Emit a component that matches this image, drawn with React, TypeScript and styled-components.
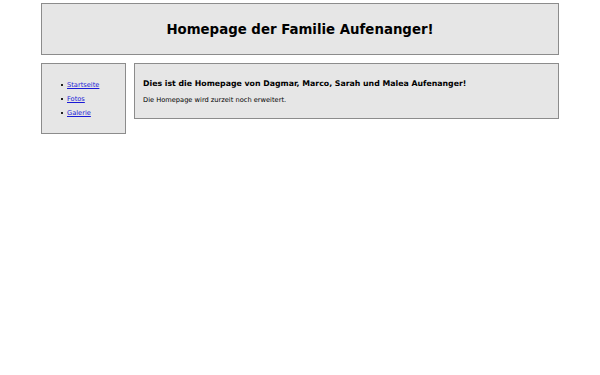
import React from "react"
import styled, { createGlobalStyle } from "styled-components"

const GlobalStyle = createGlobalStyle`
  body {
    margin: 0;
    background: #fff;
    font-family: "DejaVu Sans", Verdana, sans-serif;
    color: #000;
  }
`

const Page = styled.div`
  width: 518px;
  margin: 3px auto 0;
  display: flex;
  flex-direction: column;
  gap: 8px;
`

const Box = styled.div`
  background: #e6e6e6;
  border: 1px solid #8c8c8c;
  box-sizing: border-box;
`

const Header = styled(Box)`
  height: 52px;
  display: flex;
  align-items: center;
  justify-content: center;
`

const Title = styled.h1`
  margin: 0;
  font-size: 13.33px;
  font-weight: bold;
`

const Body = styled.div`
  display: grid;
  grid-template-columns: 85px 1fr;
  gap: 8px;
  align-items: start;
`

const Nav = styled(Box)`
  height: 71px;
  padding-top: 14px;
`

const NavList = styled.ul`
  margin: 0;
  padding-left: 19px;
  font-size: 6.67px;
  line-height: 14px;
  list-style: none;
`

const NavItem = styled.li`
  display: flex;
  align-items: center;
  gap: 4px;

  &::before {
    content: "";
    width: 2px;
    height: 2px;
    background: #222;
  }
`

const NavLink = styled.a`
  color: #1a1ad6;
  text-decoration: underline;
`

const Main = styled(Box)`
  height: 56px;
  padding: 15px 8px 0;
`

const Heading = styled.h2`
  margin: 0 0 8px;
  font-size: 7.8px;
  font-weight: bold;
`

const Text = styled.p`
  margin: 0;
  font-size: 6.67px;
`

export default function App(): JSX.Element {
  return (
    <>
      <GlobalStyle />
      <Page>
        <Header>
          <Title>Homepage der Familie Aufenanger!</Title>
        </Header>
        <Body>
          <Nav>
            <NavList>
              <NavItem><NavLink href="#">Startseite</NavLink></NavItem>
              <NavItem><NavLink href="#">Fotos</NavLink></NavItem>
              <NavItem><NavLink href="#">Galerie</NavLink></NavItem>
            </NavList>
          </Nav>
          <Main>
            <Heading>Dies ist die Homepage von Dagmar, Marco, Sarah und Malea Aufenanger!</Heading>
            <Text>Die Homepage wird zurzeit noch erweitert.</Text>
          </Main>
        </Body>
      </Page>
    </>
  )
}
